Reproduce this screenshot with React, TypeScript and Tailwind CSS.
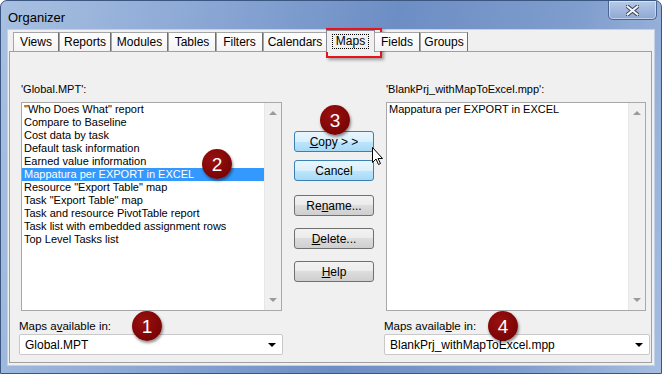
import React from 'react';

const tabs = [
  { label: 'Views', w: 'w-[46px]' },
  { label: 'Reports', w: 'w-[52px]' },
  { label: 'Modules', w: 'w-[57px]' },
  { label: 'Tables', w: 'w-[48px]' },
  { label: 'Filters', w: 'w-[47px]' },
  { label: 'Calendars', w: 'w-[64px]' },
  { label: 'Maps', w: 'w-[49px]', active: true },
  { label: 'Fields', w: 'w-[46px]' },
  { label: 'Groups', w: 'w-[48px]' },
];

const leftItems = [
  '"Who Does What" report',
  'Compare to Baseline',
  'Cost data by task',
  'Default task information',
  'Earned value information',
  'Mappatura per EXPORT in EXCEL',
  'Resource "Export Table" map',
  'Task "Export Table" map',
  'Task and resource PivotTable report',
  'Task list with embedded assignment rows',
  'Top Level Tasks list',
];

function Badge({ n, className }: { n: string; className: string }) {
  return (
    <div
      className={`absolute w-[30px] h-[30px] rounded-full bg-[radial-gradient(circle_at_40%_35%,#9a1010,#6e0000)] shadow-[1px_2px_3px_rgba(0,0,0,0.45)] flex items-center justify-center text-white text-[19px] leading-none ${className}`}
    >
      {n}
    </div>
  );
}

function Btn({ children, blue }: { children: React.ReactNode; blue?: boolean }) {
  return (
    <div
      className={`h-[21px] w-[80px] rounded-[3px] border flex items-center justify-center text-[12px] text-black ${
        blue
          ? 'border-[#3c7fb1] bg-[linear-gradient(#eaf6fd_0%,#d9f0fc_50%,#bee6fd_50%,#a7d9f5_100%)]'
          : 'border-[#707070] bg-[linear-gradient(#f2f2f2_0%,#ebebeb_50%,#dddddd_50%,#cfcfcf_100%)]'
      }`}
    >
      {children}
    </div>
  );
}

function ScrollBar() {
  return (
    <div className="w-[17px] h-full bg-[#f0f0f0] border-l border-[#e6e6e6] flex flex-col items-center justify-between py-[8px]">
      <div className="w-0 h-0 border-l-[4px] border-r-[4px] border-b-[4px] border-l-transparent border-r-transparent border-b-[#9a9a9a]" />
      <div className="w-0 h-0 border-l-[4px] border-r-[4px] border-t-[4px] border-l-transparent border-r-transparent border-t-[#9a9a9a]" />
    </div>
  );
}

function Combo({ text, w }: { text: string; w: string }) {
  return (
    <div className={`h-[21px] ${w} bg-white border border-[#c9c9c9] rounded-[2px] flex items-center justify-between pl-[5px] pr-[6px] text-[12px]`}>
      <span>{text}</span>
      <div className="w-0 h-0 border-l-[4px] border-r-[4px] border-t-[4px] border-l-transparent border-r-transparent border-t-black" />
    </div>
  );
}

export default function App() {
  return (
    <div className="w-[662px] h-[374px] bg-white font-['Liberation_Sans',Arial,sans-serif] text-black relative overflow-hidden">
      <div className="w-[662px] h-[374px] rounded-t-[7px] border border-[#3b5680] bg-[linear-gradient(100deg,#a8c0e1_0%,#8eaad6_25%,#6d8ec5_55%,#7f9dcd_80%,#a5bde0_100%)] flex flex-col px-[6px] pb-[7px]">
        {/* title bar */}
        <div className="h-[28px] flex items-start justify-between">
          <div className="pt-[7px] pl-[1px] text-[13px] text-black">Organizer</div>
          <div className="mr-[-2px] w-[49px] h-[19px] rounded-b-[5px] border border-t-0 border-[#4a6592] bg-[linear-gradient(#b7cae6,#8ea8d4)] shadow-[inset_0_0_0_1px_rgba(255,255,255,0.45)] flex items-center justify-center">
            <svg width="13" height="11" viewBox="0 0 13 11">
              <path d="M1.5 1.5 L11.5 9.5 M11.5 1.5 L1.5 9.5" stroke="#33415a" strokeWidth="4" strokeLinecap="square" />
              <path d="M1.5 1.5 L11.5 9.5 M11.5 1.5 L1.5 9.5" stroke="#f4f4f4" strokeWidth="2" strokeLinecap="square" />
            </svg>
          </div>
        </div>

        {/* client area */}
        <div className="flex-1 bg-[#f0f0f0] border border-[#c2d1e6] flex flex-col pt-[2px] pl-[1px] pr-[2px] pb-[2px] relative">
          {/* tabs */}
          <div className="flex items-end h-[19px] pl-[4px] relative z-10">
            {tabs.map((t) =>
              t.active ? (
                <div key={t.label} className={`${t.w} h-[22px] mb-[-1px] mx-[-1px] bg-[#f0f0f0] border border-b-0 border-[#898c95] flex items-start justify-center pt-[3px] text-[12px]`}>
                  <span className="border border-dotted border-black px-[3px] leading-[13px]">{t.label}</span>
                </div>
              ) : (
                <div key={t.label} className={`${t.w} h-[19px] bg-[linear-gradient(#ffffff,#f3f3f3)] border-l border-t border-r border-[#a5a5a5] border-r-[#6e6e6e] flex items-center justify-center text-[12px] whitespace-nowrap`}>
                  {t.label}
                </div>
              )
            )}
          </div>

          {/* panel */}
          <div className="flex-1 border border-[#a0a0a0] bg-[#f0f0f0] flex pl-[9px]">
            {/* left column */}
            <div className="w-[264px] flex flex-col">
              <div className="mt-[30px] pl-[2px] h-[14px] text-[11px] leading-[14px]">'Global.MPT':</div>
              <div className="mt-[6px] ml-[2px] w-[261px] h-[209px] bg-white border border-[#a8a8a8] flex">
                <div className="flex-1 flex flex-col text-[11px] leading-[13px]">
                  {leftItems.map((it) => (
                    <div
                      key={it}
                      className={`h-[13px] pl-[2px] whitespace-nowrap ${it.startsWith('Mappatura') ? 'bg-[#3399ff] text-white' : ''}`}
                    >
                      {it}
                    </div>
                  ))}
                </div>
                <ScrollBar />
              </div>
              <div className="mt-[8px] h-[14px] text-[11.5px] leading-[14px]">
                Maps a<span className="underline">v</span>ailable in:
              </div>
              <div className="mt-[1px]">
                <Combo text="Global.MPT" w="w-[264px]" />
              </div>
            </div>

            {/* buttons */}
            <div className="ml-[11px] w-[80px] flex flex-col pt-[79px]">
              <Btn blue>
                <span className="underline">C</span>opy &gt; &gt;
              </Btn>
              <div className="mt-[8px]">
                <Btn blue>Cancel</Btn>
              </div>
              <div className="mt-[14px]">
                <Btn>
                  Re<span className="underline">n</span>ame...
                </Btn>
              </div>
              <div className="mt-[12px]">
                <Btn>
                  <span className="underline">D</span>elete...
                </Btn>
              </div>
              <div className="mt-[12px]">
                <Btn>
                  <span className="underline">H</span>elp
                </Btn>
              </div>
            </div>

            {/* right column */}
            <div className="ml-[10px] w-[266px] flex flex-col">
              <div className="mt-[30px] pl-[2px] h-[14px] text-[11px] leading-[14px]">'BlankPrj_withMapToExcel.mpp':</div>
              <div className="mt-[6px] ml-[2px] w-[260px] h-[209px] bg-white border border-[#a8a8a8] flex">
                <div className="flex-1 flex flex-col text-[11px] leading-[13px]">
                  <div className="h-[13px] pl-[2px] whitespace-nowrap">Mappatura per EXPORT in EXCEL</div>
                </div>
                <ScrollBar />
              </div>
              <div className="mt-[8px] h-[14px] text-[11.5px] leading-[14px]">
                Maps availa<span className="underline">b</span>le in:
              </div>
              <div className="mt-[1px]">
                <Combo text="BlankPrj_withMapToExcel.mpp" w="w-[266px]" />
              </div>
            </div>
          </div>
        </div>
      </div>

      {/* annotations */}
      <div className="absolute left-[326px] top-[28px] w-[56px] h-[30px] border-2 border-[#e8141b] shadow-[2px_2px_3px_rgba(0,0,0,0.35)]" />
      <Badge n="1" className="left-[132px] top-[311px]" />
      <Badge n="2" className="left-[202px] top-[149px]" />
      <Badge n="3" className="left-[320px] top-[105px]" />
      <Badge n="4" className="left-[488px] top-[311px]" />
      <svg className="absolute left-[372px] top-[147px]" width="12" height="19" viewBox="0 0 12 19">
        <path d="M0.5 0.5 L0.5 15.5 L4 12 L6.5 17.5 L8.5 16.5 L6 11.5 L10.5 11.5 Z" fill="#ffffff" stroke="#000000" strokeWidth="1" strokeLinejoin="round" />
      </svg>
    </div>
  );
}
